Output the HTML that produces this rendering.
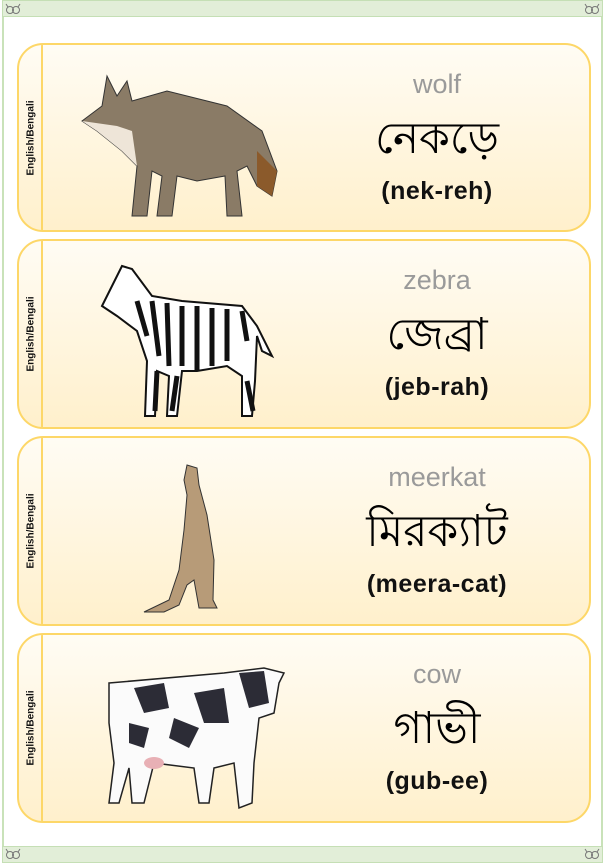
<!DOCTYPE html>
<html><head><meta charset="utf-8"><style>
*{margin:0;padding:0;box-sizing:border-box}
body{width:605px;height:863px;background:#fff;position:relative;overflow:hidden;font-family:"Liberation Sans","DejaVu Sans",sans-serif}
.bar{position:absolute;left:2px;width:601px;height:17px;background:#e2eed8;border:1px solid #c5dfb5}
.frame{position:absolute;left:2px;top:0;width:601px;height:863px;border:2px solid #c9e2b9;border-radius:3px}
.card{position:absolute;left:17px;width:574px;border:2px solid #fdd768;border-radius:26px;background:linear-gradient(180deg,#fffcf4 0%,#fff0cc 100%);overflow:hidden}
.strip{position:absolute;left:0;top:0;bottom:0;width:24px;border-right:2px solid #fdd768}
.lab{position:absolute;left:12px;top:50%;transform:translate(-50%,-50%) rotate(-90deg);font-size:10px;font-weight:bold;white-space:nowrap;color:#111}
.en{position:absolute;left:318px;width:200px;text-align:center;color:#9a9a9a;font-size:27px;top:24px}
.bn{position:absolute;left:268px;width:300px;text-align:center;color:#000;font-size:44px;top:60px}
.pr{position:absolute;left:268px;width:300px;text-align:center;color:#111;font-size:25px;font-weight:bold;top:132px;letter-spacing:0.5px}
svg.a{position:absolute}
</style></head><body>
<div class="frame"></div>
<div class="bar" style="top:0"></div>
<div class="bar" style="top:846px"></div>
<svg style="position:absolute;left:5px;top:2px" width="16" height="14"><circle cx="5" cy="8" r="3.5" fill="none" stroke="#777"/><circle cx="11" cy="8" r="3.5" fill="none" stroke="#777"/><path d="M1 2L3 5M15 2L13 5" stroke="#777"/></svg>
<svg style="position:absolute;left:584px;top:2px" width="16" height="14"><circle cx="5" cy="8" r="3.5" fill="none" stroke="#777"/><circle cx="11" cy="8" r="3.5" fill="none" stroke="#777"/><path d="M1 2L3 5M15 2L13 5" stroke="#777"/></svg>
<svg style="position:absolute;left:5px;top:847px" width="16" height="14"><circle cx="5" cy="8" r="3.5" fill="none" stroke="#777"/><circle cx="11" cy="8" r="3.5" fill="none" stroke="#777"/><path d="M1 2L3 5M15 2L13 5" stroke="#777"/></svg>
<svg style="position:absolute;left:584px;top:847px" width="16" height="14"><circle cx="5" cy="8" r="3.5" fill="none" stroke="#777"/><circle cx="11" cy="8" r="3.5" fill="none" stroke="#777"/><path d="M1 2L3 5M15 2L13 5" stroke="#777"/></svg>

<div class="card" style="top:43px;height:189px"><div class="strip"><div class="lab">English/Bengali</div></div>
<div class="en">wolf</div><div class="bn">নেকড়ে</div><div class="pr">(nek-reh)</div>
<svg class="a" style="left:58px;top:26px" width="205" height="152"><path d="M5 50L25 35L30 5L40 25L50 10L55 30L90 20L150 35L185 60L200 100L195 125L180 115L170 95L160 100L165 145L150 145L148 105L120 110L100 105L95 145L80 145L85 105L75 100L70 145L55 145L60 95L45 80L20 60Z" fill="#8a7b66" stroke="#333"/><path d="M5 50L20 60L45 80L60 95L55 60L40 55Z" fill="#eee5d8"/><path d="M180 80L200 100L195 125L180 115Z" fill="#8b5a2b"/></svg></div>

<div class="card" style="top:239px;height:190px"><div class="strip"><div class="lab">English/Bengali</div></div>
<div class="en">zebra</div><div class="bn">জেব্রা</div><div class="pr">(jeb-rah)</div>
<svg class="a" style="left:78px;top:20px" width="180" height="162"><path d="M5 45L25 5L35 8L55 35L85 40L145 45L160 65L175 95L165 90L160 75L158 120L155 155L145 155L145 115L130 105L100 110L85 110L80 155L70 155L72 115L60 110L58 155L48 155L50 100L40 70L20 55Z" fill="#fff" stroke="#111" stroke-width="2"/><g stroke="#111" stroke-width="5"><path d="M40 40L50 75M55 40L62 95M70 42L72 105M85 45L85 105M100 45L100 110M115 47L115 105M130 48L130 100M145 50L150 80M60 110L58 150M80 115L75 150M150 120L156 150"/></g></svg></div>

<div class="card" style="top:436px;height:190px"><div class="strip"><div class="lab">English/Bengali</div></div>
<div class="en">meerkat</div><div class="bn">মিরক্যাট</div><div class="pr">(meera-cat)</div>
<svg class="a" style="left:120px;top:22px" width="80" height="158"><path d="M48 5L58 8L60 25L68 55L75 100L74 140L78 148L60 148L55 120L48 125L40 145L25 152L5 152L30 140L40 110L45 70L48 35L45 20Z" fill="#b79b78" stroke="#333"/></svg></div>

<div class="card" style="top:633px;height:190px"><div class="strip"><div class="lab">English/Bengali</div></div>
<div class="en">cow</div><div class="bn">গাভী</div><div class="pr">(gub-ee)</div>
<svg class="a" style="left:85px;top:28px" width="185" height="150"><path d="M5 20L120 10L160 5L180 10L175 20L170 50L155 55L150 100L148 140L135 145L130 100L110 105L105 140L95 140L90 105L50 100L40 140L28 140L25 105L15 140L5 140L10 100L5 60Z" fill="#fbfbfb" stroke="#222" stroke-width="1.5"/><g fill="#2c2c36"><path d="M30 25L60 20L65 45L40 50Z"/><path d="M90 30L120 25L125 60L100 60Z"/><path d="M25 60L45 65L40 85L25 80Z"/><path d="M135 10L160 8L165 40L145 45Z"/><path d="M70 55L95 65L85 85L65 75Z"/></g><ellipse cx="50" cy="100" rx="10" ry="6" fill="#e8b0b5"/></svg></div>
</body></html>
